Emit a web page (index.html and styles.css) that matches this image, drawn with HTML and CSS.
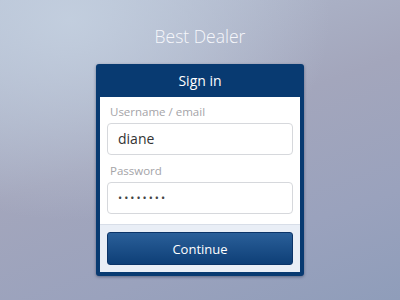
FILE: index.html
```html
<!DOCTYPE html>
<html>
<head>
<meta charset="utf-8">
<link rel="stylesheet" href="styles.css">
</head>
<body>
<main class="page">
  <h1 class="brand">Best Dealer</h1>
  <section class="card">
    <header class="card-head">Sign in</header>
    <div class="card-body">
      <label class="label">Username / email</label>
      <div class="input">diane</div>
      <label class="label">Password</label>
      <div class="input password">••••••••</div>
    </div>
    <footer class="card-foot">
      <button class="btn">Continue</button>
    </footer>
  </section>
</main>
</body>
</html>
```
FILE: styles.css
```css
html, body {
  margin: 0;
  height: 100%;
}
body {
  font-family: "Open Sans", "Noto Sans", sans-serif;
  background:
    radial-gradient(ellipse 260px 200px at 70px 20px, rgba(196,208,224,0.9), rgba(196,208,224,0) 100%),
    linear-gradient(160deg, #b4bfd2 0%, #a3a6bc 45%, #9aa2bd 75%, #8f9dba 100%);
  background-color: #a0a6bd;
  overflow: hidden;
}
.page {
  display: flex;
  flex-direction: column;
  align-items: center;
}
.brand {
  margin: 24px 0 0;
  height: 40px;
  font-size: 17.5px;
  line-height: 24px;
  font-weight: 300;
  color: #f6f7fb;
}
.card {
  width: 200px;
  background: #083a71;
  border-radius: 3px;
  padding: 0 4px 4px;
  box-shadow: 0 1px 3px rgba(20,30,60,0.45);
}
.card-head {
  height: 33px;
  line-height: 33px;
  text-align: center;
  color: #fff;
  font-size: 14px;
}
.card-body {
  background: #fff;
  padding: 8px 7px 10px;
  display: flex;
  flex-direction: column;
}
.label {
  font-size: 11.5px;
  line-height: 14px;
  color: #a4a4a8;
  padding-left: 3px;
  margin-bottom: 4px;
}
.input {
  height: 30px;
  border: 1px solid #d6d8dc;
  border-radius: 4px;
  padding-left: 10px;
  font-size: 14px;
  line-height: 30px;
  color: #333;
  margin-bottom: 9px;
}
.input:last-child {
  margin-bottom: 0;
}
.password {
  font-size: 11px;
  letter-spacing: 2px;
  color: #444;
}
.card-foot {
  background: #e9eef6;
  border-top: 1px solid #d8dee8;
  padding: 7px 7px 7px;
}
.btn {
  display: block;
  width: 100%;
  height: 33px;
  border: 1px solid #0b3468;
  border-radius: 3px;
  background: linear-gradient(#2a5f99, #0e3f77);
  color: #fff;
  font-family: "Open Sans", "Noto Sans", sans-serif;
  font-size: 13px;
  padding: 0;
}
```
